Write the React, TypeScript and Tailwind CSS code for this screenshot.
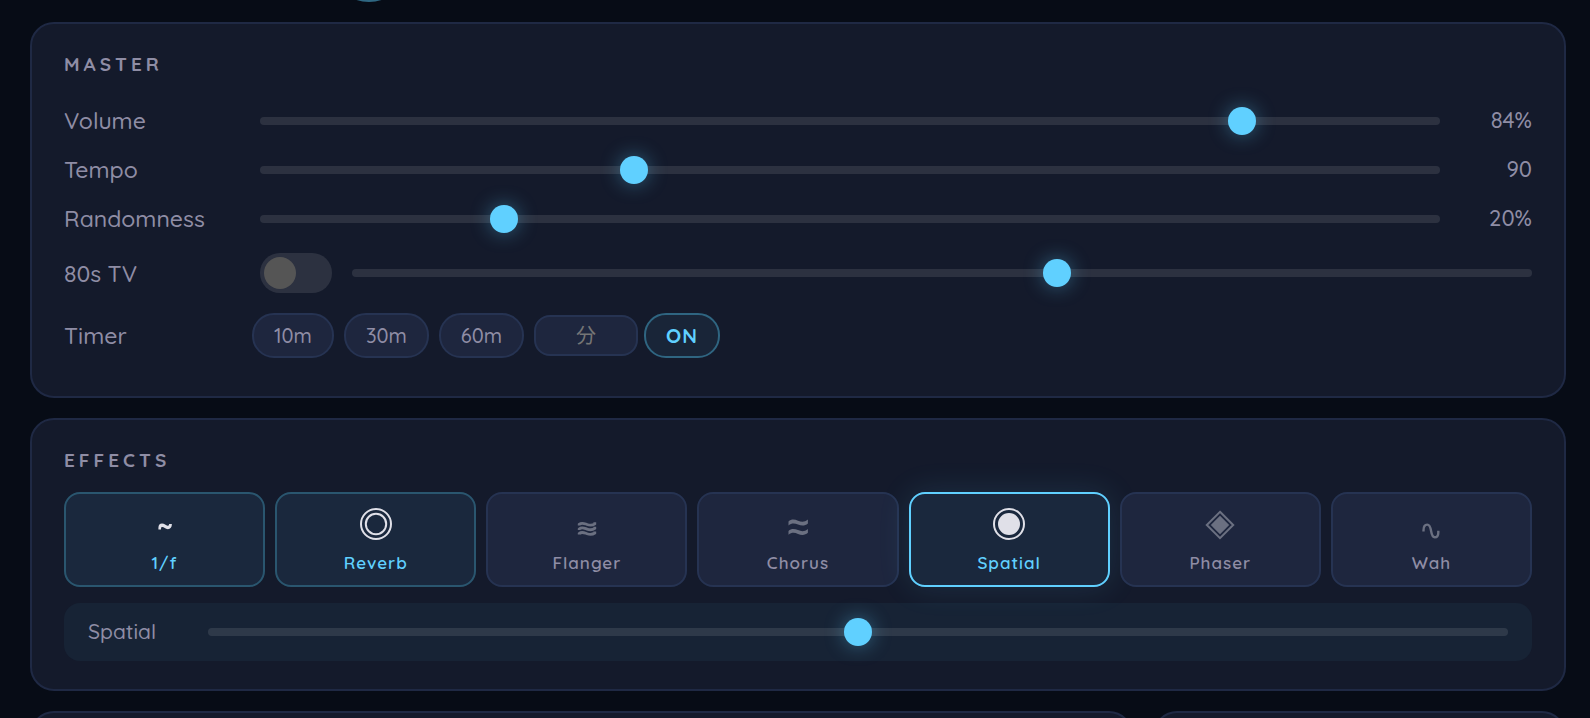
import React, { useState } from "react";

type Effect = { id: string; name: string; icon: React.ReactNode };

const effects: Effect[] = [
  {
    id: "pink",
    name: "1/f",
    icon: (
      <path
        d="M9.400 21.400v-1.400c0-3 1.400-4.400 3.600-4.400 2.500 0 3.900 2.200 5.600 2.200 1.100 0 1.500-.6 1.500-1.800h2.800c0 3.400-1.500 5.200-4 5.200-2.600 0-4-2.200-5.600-2.200-1 0-1.300.6-1.300 2.400z"
        fill="currentColor"
      />
    ),
  },
  {
    id: "reverb",
    name: "Reverb",
    icon: (
      <g fill="none" stroke="currentColor" strokeWidth="2">
        <circle cx="16" cy="16" r="15" />
        <circle cx="16" cy="16" r="10.200" />
      </g>
    ),
  },
  {
    id: "flanger",
    name: "Flanger",
    icon: (
      <g fill="none" stroke="currentColor" strokeWidth="2.8">
        <path d="M8.200 17.400v-1c2.600-2.400 5.200-.8 7.800.1s5.200 1.200 7.800-.7v-1.600" />
        <path d="M8.200 22v-1c2.600-2.400 5.200-.8 7.800.1s5.200 1.200 7.800-.7v-1.600" />
        <path d="M8.200 26.600v-1c2.600-2.400 5.200-.8 7.800.1s5.200 1.200 7.800-.7v-1.600" />
      </g>
    ),
  },
  {
    id: "chorus",
    name: "Chorus",
    icon: (
      <g fill="currentColor">
        <path d="M6.500 13.500c2.600-2.400 5.800-2.400 9.500-.8 3.700 1.500 6.500 1.600 9.900-1.100v3.800c-2.800 2.500-6.200 2.600-9.900 1.100-3.700-1.600-6.500-1.600-9.500.9z" />
        <path d="M6.500 22.900c2.600-2.400 5.800-2.400 9.500-.8 3.700 1.500 6.500 1.600 9.900-1.100v3.800c-2.800 2.500-6.200 2.600-9.900 1.100-3.700-1.600-6.500-1.600-9.500.9z" />
      </g>
    ),
  },
  {
    id: "spatial",
    name: "Spatial",
    icon: (
      <g fill="currentColor">
        <circle cx="16" cy="16" r="15" fill="none" stroke="currentColor" strokeWidth="2" />
        <circle cx="16" cy="16" r="11" />
      </g>
    ),
  },
  {
    id: "phaser",
    name: "Phaser",
    icon: (
      <g fill="currentColor">
        <path d="M16 3.800 29.200 17 16 30.200 2.800 17z" fill="none" stroke="currentColor" strokeWidth="2" />
        <path d="M16 7.800 25.200 17 16 26.200 6.800 17z" />
      </g>
    ),
  },
  {
    id: "wah",
    name: "Wah",
    icon: (
      <path
        d="M8.500 23.600v-1.200c0-3.600 1.600-5.800 3.700-5.800 5.600 0 2.200 12.700 7.600 12.700 2.200 0 3.500-1.700 3.500-4.600v-2"
        fill="none"
        stroke="currentColor"
        strokeWidth="2.400"
      />
    ),
  },
];

const sliderClass =
  "h-2 min-w-0 flex-1 cursor-pointer appearance-none rounded-full bg-white/10 outline-none [&::-webkit-slider-thumb]:h-7 [&::-webkit-slider-thumb]:w-7 [&::-webkit-slider-thumb]:appearance-none [&::-webkit-slider-thumb]:rounded-full [&::-webkit-slider-thumb]:bg-[#60d0ff] [&::-webkit-slider-thumb]:shadow-[0_0_20px_rgba(96,208,255,0.4)]";

const panelClass = "rounded-3xl border-2 border-[#1f2944] bg-[#141a2b] px-8 py-7";
const titleClass = "mb-5 text-[19px] leading-6 font-bold tracking-[4px]";
const labelClass = "w-44 shrink-0 text-[23px] leading-[29px]";
const pillClass =
  "h-[45px] rounded-[22px] border-2 px-5 text-[20px]";

type SliderRowProps = {
  id: string;
  label: string;
  min?: number;
  max?: number;
  initial: number;
  unit?: string;
};

const SliderRow: React.FC<SliderRowProps> = ({ id, label, min = 0, max = 100, initial, unit = "" }) => {
  const [value, setValue] = useState<number>(initial);

  return (
    <div className="flex items-center gap-5 py-2.5">
      <label htmlFor={id} className={labelClass}>
        {label}
      </label>
      <input
        id={id}
        type="range"
        min={min}
        max={max}
        value={value}
        onChange={(e) => setValue(Number(e.target.value))}
        className={sliderClass}
      />
      <output htmlFor={id} className="w-18 shrink-0 text-right text-[22px] leading-[29px]">
        {value}
        {unit}
      </output>
    </div>
  );
};

const App: React.FC = () => {
  const [tvOn, setTvOn] = useState(false);
  const [tvLevel, setTvLevel] = useState(60);
  const [minutes, setMinutes] = useState("");
  const [active, setActive] = useState<string[]>(["pink", "reverb", "spatial"]);
  const [selected, setSelected] = useState("spatial");
  const [amount, setAmount] = useState(50);

  const selectEffect = (id: string) => {
    setSelected(id);
    if (!active.includes(id)) setActive([...active, id]);
  };

  const effectClass = (id: string) => {
    if (id === selected) {
      return "border-[#60d0ff] bg-[#1a283d] text-[#60d0ff] shadow-[0_0_32px_rgba(96,208,255,0.13)]";
    }
    if (active.includes(id)) return "border-[#2a566f] bg-[#1a283d] text-[#60d0ff]";
    return "border-[#263352] bg-[#1e263e] text-[#8f8da5]";
  };

  return (
    <div className="flex h-screen flex-col gap-5 overflow-hidden bg-[#070c16] pr-6 pl-[30px] font-['Quicksand','Lato','Noto_Sans_CJK_JP',sans-serif] font-medium text-[#8f8da5]">
      {/* Bottom edge of the transport bar, scrolled out of view */}
      <div className="flex h-0.5 shrink-0 items-end overflow-hidden pl-[299px]">
        <div className="size-20 shrink-0 rounded-full bg-[#2f6883]" />
      </div>

      <section className={panelClass}>
        <h2 className={titleClass}>MASTER</h2>
        <SliderRow id="volume" label="Volume" initial={84} unit="%" />
        <SliderRow id="tempo" label="Tempo" min={40} max={200} initial={90} />
        <SliderRow id="randomness" label="Randomness" initial={20} unit="%" />

        <div className="flex items-center gap-5 py-2.5">
          <label htmlFor="tv" className={labelClass}>
            80s TV
          </label>
          <input
            id="tv"
            type="checkbox"
            role="switch"
            checked={tvOn}
            onChange={(e) => setTvOn(e.target.checked)}
            className="flex h-10 w-18 shrink-0 cursor-pointer appearance-none items-center rounded-full bg-white/10 px-1 before:size-8 before:rounded-full before:bg-[#555555] checked:justify-end checked:before:bg-[#60d0ff]"
          />
          <input
            type="range"
            aria-label="80s TV level"
            value={tvLevel}
            onChange={(e) => setTvLevel(Number(e.target.value))}
            className={sliderClass}
          />
        </div>

        <div className="flex items-center gap-3 py-2.5">
          <label htmlFor="minutes" className={labelClass}>
            Timer
          </label>
          <div className="flex items-center gap-2.5">
            {["10", "30", "60"].map((m) => (
              <button
                key={m}
                type="button"
                onClick={() => setMinutes(m)}
                className={`${pillClass} border-[#263352] bg-[#1e263e] font-medium`}
              >
                {m}m
              </button>
            ))}
            <div className="flex items-center gap-1.5">
              <input
                id="minutes"
                type="text"
                inputMode="numeric"
                placeholder="分"
                value={minutes}
                onChange={(e) => setMinutes(e.target.value)}
                className="h-[41px] w-26 rounded-2xl border-2 border-[#263352] bg-[#1e263e] text-center text-[20px] font-normal outline-none placeholder:text-[#757575]"
              />
              <button
                type="button"
                className={`${pillClass} border-[#2f6581] bg-[#192538] font-bold tracking-[1px] text-[#60d0ff]`}
              >
                ON
              </button>
            </div>
          </div>
        </div>
      </section>

      <section className={panelClass}>
        <h2 className={titleClass}>EFFECTS</h2>
        <div className="grid grid-cols-7 gap-2.5">
          {effects.map((fx) => (
            <button
              key={fx.id}
              type="button"
              aria-pressed={active.includes(fx.id)}
              onClick={() => selectEffect(fx.id)}
              className={`flex flex-col items-center gap-3 rounded-2xl border-2 pt-3.5 pb-[11px] ${effectClass(fx.id)}`}
            >
              <svg
                viewBox="0 0 32 32"
                aria-hidden="true"
                className={`size-8 ${active.includes(fx.id) ? "text-[#e0e0e8]" : "text-[#6b7081]"}`}
              >
                {fx.icon}
              </svg>
              <span className="text-[17px] leading-[22px] font-semibold tracking-[1px]">{fx.name}</span>
            </button>
          ))}
        </div>
        <div className="mt-4 flex h-[58px] items-center gap-5 rounded-2xl bg-[#172335] px-6">
          <label htmlFor="amount" className="w-25 shrink-0 text-[21px]">
            {effects.find((fx) => fx.id === selected)?.name}
          </label>
          <input
            id="amount"
            type="range"
            value={amount}
            onChange={(e) => setAmount(Number(e.target.value))}
            className={sliderClass}
          />
        </div>
      </section>

      {/* Next row of panels runs past the fold */}
      <div className="grid min-h-7 flex-1 grid-cols-[8fr_3fr] gap-5">
        <section className="rounded-t-3xl border-2 border-b-0 border-[#1f2944] bg-[#141a2b]" />
        <section className="rounded-t-3xl border-2 border-b-0 border-[#1f2944] bg-[#141a2b]" />
      </div>
    </div>
  );
};

export default App;
